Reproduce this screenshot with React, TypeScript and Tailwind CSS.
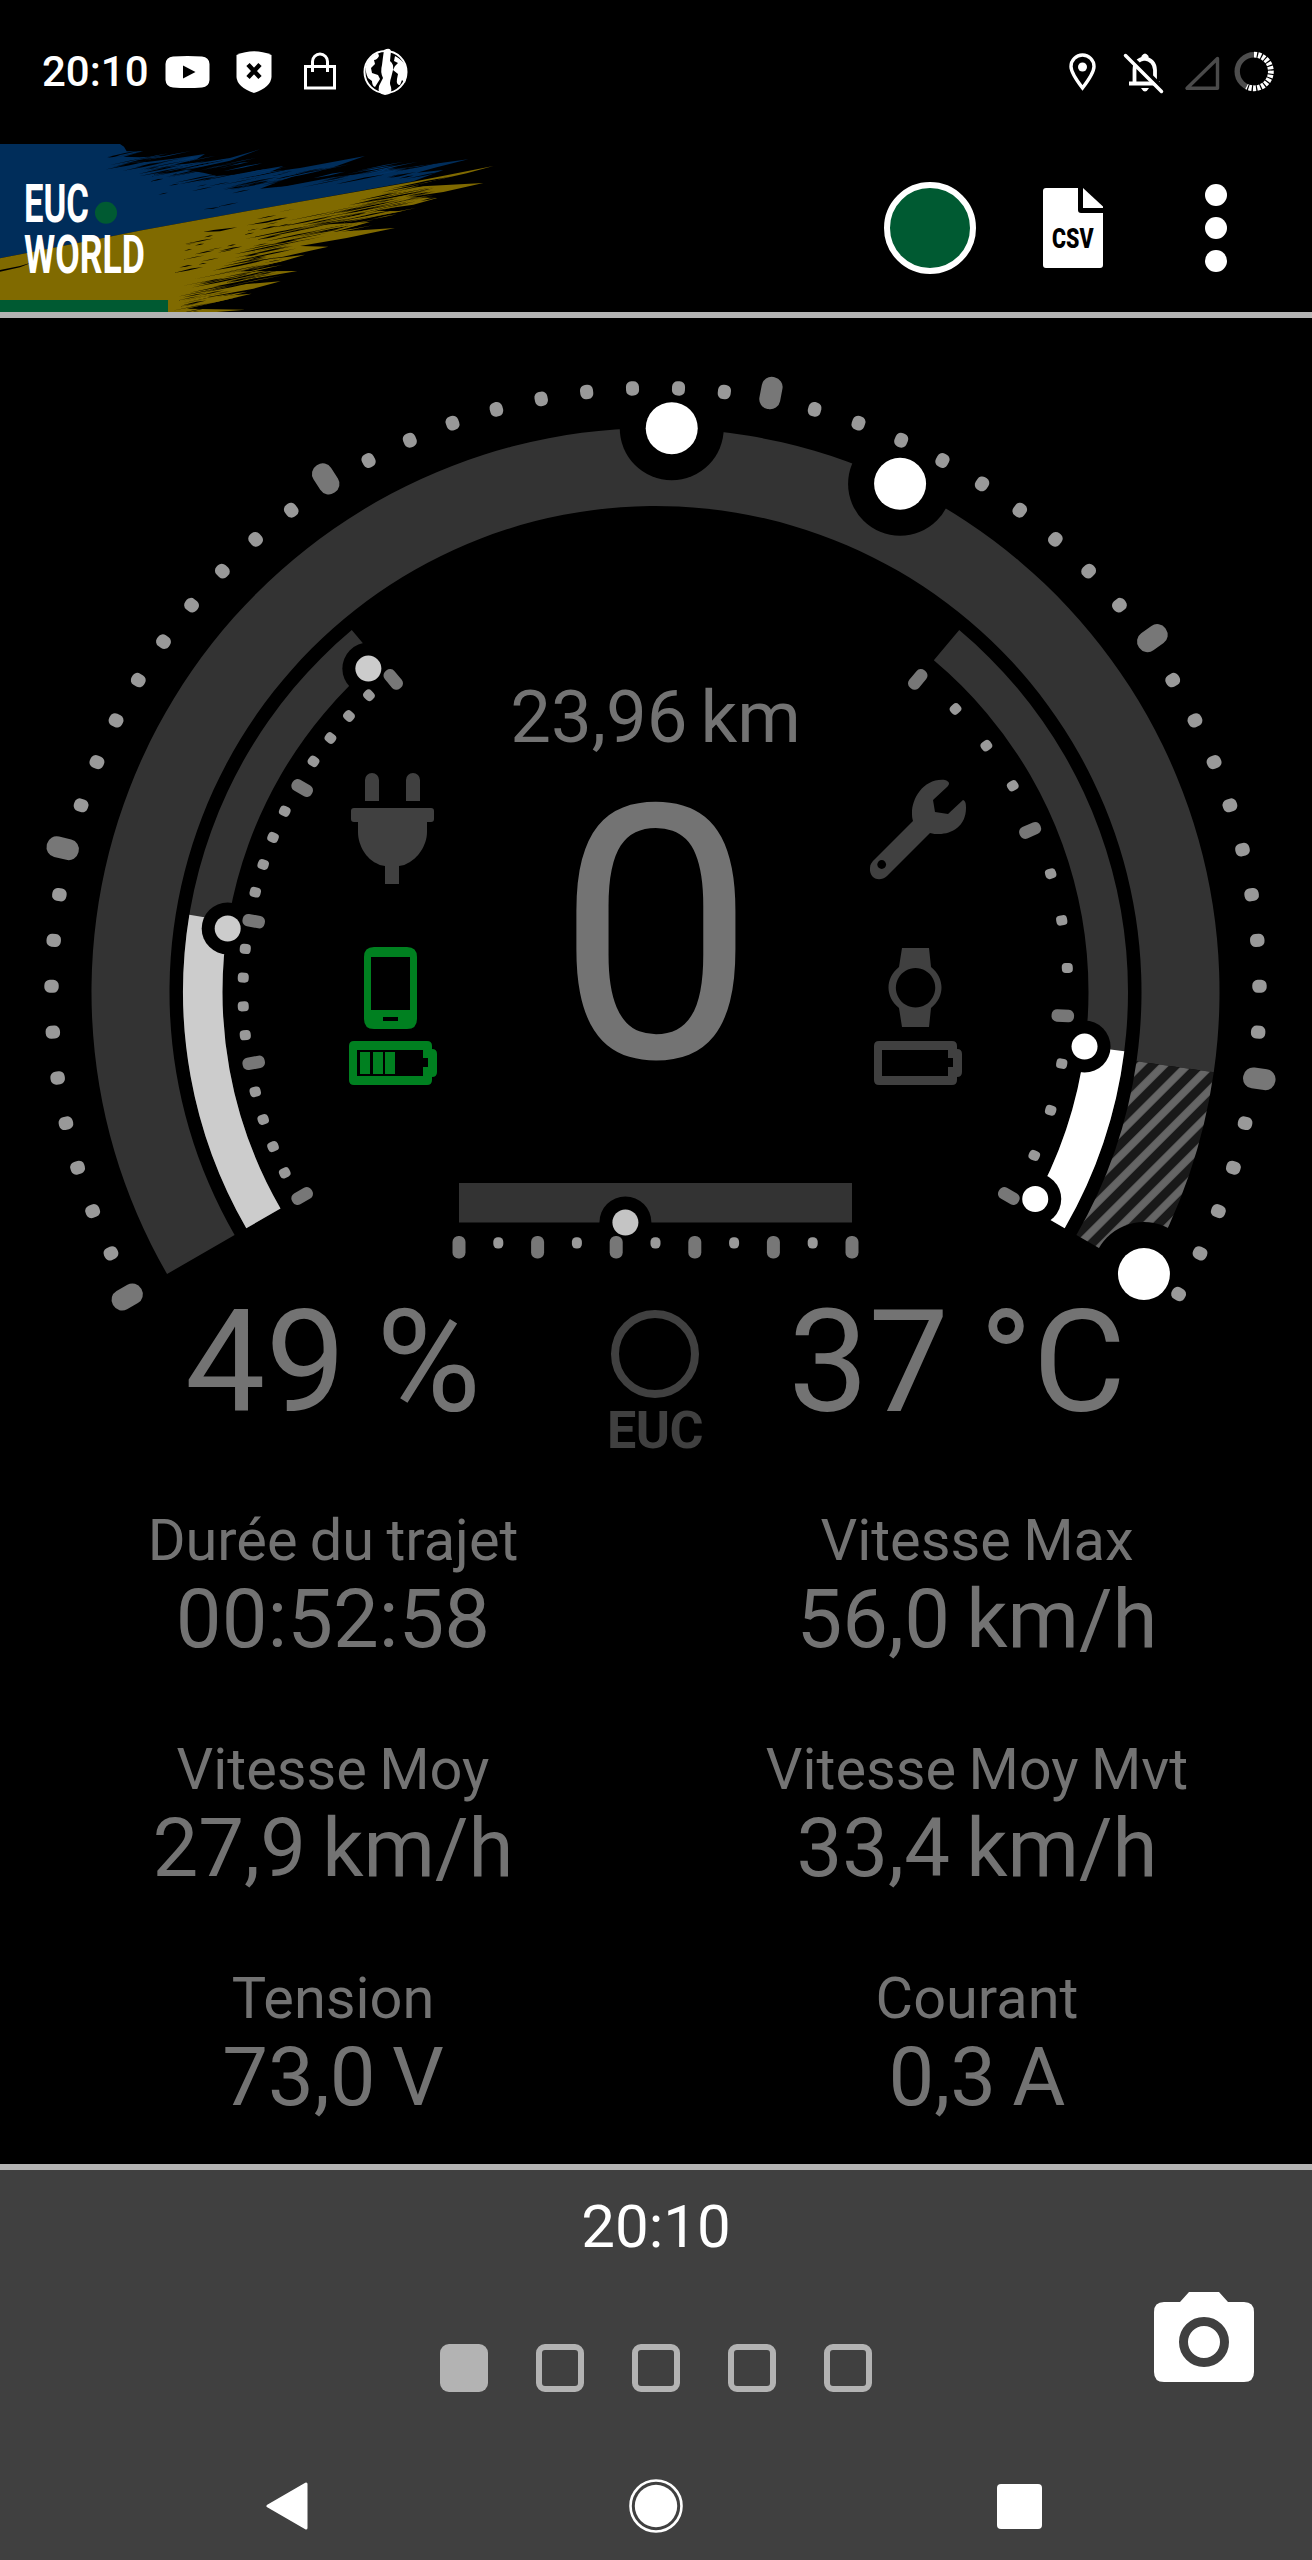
import React from "react";

const CX = 655.5;
const CY = 992;

const rad = (deg: number) => (deg * Math.PI) / 180;
const polar = (r: number, deg: number) => ({
  x: CX + r * Math.cos(rad(deg)),
  y: CY + r * Math.sin(rad(deg)),
});

/** Ring segment drawn clockwise between two angles (degrees, 0 = right). */
function ring(r0: number, r1: number, a0: number, a1: number) {
  const large = a1 - a0 > 180 ? 1 : 0;
  const p1 = polar(r1, a0);
  const p2 = polar(r1, a1);
  const p3 = polar(r0, a1);
  const p4 = polar(r0, a0);
  return `M${p1.x} ${p1.y}A${r1} ${r1} 0 ${large} 1 ${p2.x} ${p2.y}L${p3.x} ${p3.y}A${r0} ${r0} 0 ${large} 0 ${p4.x} ${p4.y}Z`;
}

type TickProps = { r: number; deg: number; len: number; w: number; rx: number; fill: string };

function Tick({ r, deg, len, w, rx, fill }: TickProps) {
  return (
    <rect
      x={r - len / 2}
      y={-w / 2}
      width={len}
      height={w}
      rx={rx}
      fill={fill}
      transform={`translate(${CX} ${CY}) rotate(${deg})`}
    />
  );
}

function Halo({ r, deg, size }: { r: number; deg: number; size: number }) {
  const p = polar(r, deg);
  return <circle cx={p.x} cy={p.y} r={size * 2} fill="#000" />;
}

function Knob({ r, deg, size, fill }: { r: number; deg: number; size: number; fill: string }) {
  const p = polar(r, deg);
  return <circle cx={p.x} cy={p.y} r={size} fill={fill} />;
}

const mainKnobs = [271.65, 295.7, 30];

function Gauge() {
  const outer = Array.from({ length: 56 }, (_, i) => i);
  const left = Array.from({ length: 21 }, (_, i) => i);
  const right = Array.from({ length: 13 }, (_, i) => i);
  return (
    <svg viewBox="0 318 1312 972" className="block h-[972px] w-full shrink-0 overflow-visible">
      <defs>
        <pattern
          id="hatch"
          width="16.7"
          height="16.7"
          patternUnits="userSpaceOnUse"
          patternTransform="translate(1183.3 1069.3) rotate(-45)"
        >
          <rect width="16.7" height="16.7" fill="#191919" />
          <rect width="16.7" height="3.8" fill="#666" />
          <rect y="12.9" width="16.7" height="3.8" fill="#666" />
        </pattern>
      </defs>

      <path d={ring(486, 564, 150, 368.18)} fill="#333" />
      <path d={ring(486, 564, 8.18, 30)} fill="url(#hatch)" />
      {mainKnobs.map((a) => (
        <Halo key={a} r={564} deg={a} size={26} />
      ))}

      <path d={ring(433, 472.5, 150, 230)} fill="#333" />
      <path d={ring(433, 472.5, 150, 189.4)} fill="#ccc" />
      <Halo r={432.5} deg={188.45} size={13} />
      <Halo r={432.5} deg={228.4} size={13} />

      <path d={ring(433, 472.5, -50, 30)} fill="#333" />
      <path d={ring(433, 472.5, 7.2, 30)} fill="#fff" />
      <Halo r={432.5} deg={7.25} size={13} />
      <Halo r={432.5} deg={28.6} size={13} />

      {outer.map((i) =>
        i % 10 === 0 ? (
          <Tick key={i} r={610} deg={150 + (i * 240) / 55} len={32.5} w={21} rx={10} fill="#777" />
        ) : (
          <Tick key={i} r={604} deg={150 + (i * 240) / 55} len={14.4} w={13} rx={5.5} fill="#999" />
        ),
      )}
      {left.map((i) =>
        i % 5 === 0 ? (
          <Tick key={i} r={408} deg={150 + i * 4} len={22.5} w={12.5} rx={5.5} fill="#777" />
        ) : (
          <Tick key={i} r={412.5} deg={150 + i * 4} len={11} w={10} rx={4} fill="#999" />
        ),
      )}
      {right.map((i) =>
        i % 4 === 0 ? (
          <Tick key={i} r={408} deg={30 - (i * 80) / 12} len={22.5} w={12.5} rx={5.5} fill="#777" />
        ) : (
          <Tick key={i} r={412.5} deg={30 - (i * 80) / 12} len={11} w={10} rx={4} fill="#999" />
        ),
      )}

      {mainKnobs.map((a) => (
        <Knob key={a} r={564} deg={a} size={26} fill="#fff" />
      ))}
      <Knob r={432.5} deg={188.45} size={13} fill="#ccc" />
      <Knob r={432.5} deg={228.4} size={13} fill="#ccc" />
      <Knob r={432.5} deg={7.25} size={13} fill="#fff" />
      <Knob r={432.5} deg={28.6} size={13} fill="#fff" />

      {/* horizontal power bar */}
      <rect x="459" y="1183" width="393" height="39.5" fill="#333" />
      <circle cx="625.4" cy="1222.5" r="26" fill="#000" />
      {Array.from({ length: 11 }, (_, i) =>
        i % 2 === 0 ? (
          <rect key={i} x={452.5 + i * 39.3} y="1236" width="13" height="22.6" rx="6" fill="#777" />
        ) : (
          <rect key={i} x={454 + i * 39.3} y="1237.2" width="10" height="11.4" rx="4.5" fill="#999" />
        ),
      )}
      <circle cx="625.4" cy="1222.5" r="13" fill="#c4c4c4" />

      <g fontFamily="Roboto, sans-serif" fill="#737373" textAnchor="middle">
        <text x="655.5" y="742" fontSize="72.5" wordSpacing="-5">23,96 km</text>
        <text x="656" y="1057" fontSize="354">0</text>
      </g>

      {/* plug */}
      <g fill="#404040">
        <path d="M365 801v-21a7 7 0 0 1 14 0v21zM406 801v-21a7 7 0 0 1 14 0v21z" />
        <path d="M354 808h77q3 0 3 3v8q0 3-3 3h-4v10c0 14-10 27-19 31q-4 3-9 3v18h-14v-18q-5 0-9-3c-9-4-18-17-18-31v-10h-4q-3 0-3-3v-8q0-3 3-3z" />
      </g>

      {/* wrench */}
      <g>
        <path
          d="M945 780c6 2 4 5 2 7l-14 13 2 12 13 2 15-14c3 1 3 5 3 8 0 18-14 26-27 26-3 0-6 0-9-1l-43 43c-8 7-18 2-17-8 0-4 2-6 5-9l38-38c-1-3-1-6-1-8 0-15 12-35 33-33z"
          fill="#404040"
        />
        <circle cx="881.7" cy="864.5" r="4.4" fill="#000" />
      </g>

      {/* phone and its battery */}
      <g fill="#008020">
        <path
          fillRule="evenodd"
          d="M374 947h33q10 0 10 10v62q0 10-10 10h-33q-10 0-10-10v-62q0-10 10-10zM371 957v53h39v-53zM383 1017v4h15v-4z"
        />
        <path
          fillRule="evenodd"
          d="M354 1041h73q5 0 5 5v3q5 0 5 5v18q0 5-5 5v3q0 5-5 5h-73q-5 0-5-5v-34q0-5 5-5zM357 1050v26h66v-9h5v-9h-5v-8z"
        />
        <path d="M360 1052h10v22h-10zM373 1052h10v22h-10zM385 1052h10v22h-10z" />
      </g>

      {/* watch and its battery */}
      <g fill="#404040">
        <path
          fillRule="evenodd"
          d="M902 948h27l2 19c14 11 14 30 0 41l-2 19h-27l-3-19c-14-11-14-30 0-41zM915.500 968a19.700 19.700 0 1 0 .1 0z"
        />
        <path
          fillRule="evenodd"
          d="M879 1041h73q5 0 5 5v3q5 0 5 5v18q0 5-5 5v3q0 5-5 5h-73q-5 0-5-5v-34q0-5 5-5zM882 1050v26h66v-9h5v-9h-5v-8z"
        />
      </g>
    </svg>
  );
}

/** Deterministic bristle marks for the painted flag. */
function bristles(seed: number, count: number, x0: number, y0: number, x1: number, y1: number, spread: number, len: number) {
  let s = seed;
  const next = () => {
    s = (s * 16807) % 2147483647;
    return s / 2147483647;
  };
  return Array.from({ length: count }, () => {
    const t = next();
    const x = x0 + (x1 - x0) * t + (next() - 0.5) * 60;
    const y = y0 + (y1 - y0) * t + (next() - 0.5) * spread;
    const l = len * (0.3 + next());
    const h = 0.6 + next() * 1.9;
    return `M${x - l / 2} ${y + l * 0.1}L${x + l * 0.1} ${y - l * 0.02 - h}L${x + l / 2} ${y - l * 0.1}L${x} ${y + h * 0.6}Z`;
  }).join("");
}

const blueGaps =
  bristles(11011, 36, 360, 50, 640, 100, 46, 120) + bristles(50123, 44, 700, 125, 1300, 92, 40, 130) + bristles(81077, 12, 450, 120, 760, 180, 90, 50);
const blueMarks = bristles(23011, 16, 430, 50, 720, 75, 26, 110) + bristles(61331, 18, 760, 105, 1180, 85, 26, 150);
const yellowGaps =
  bristles(37123, 75, 1270, 145, 800, 310, 60, 160) + bristles(41543, 60, 820, 335, 560, 500, 60, 140) + bristles(97001, 24, 560, 350, 900, 240, 110, 70);
const yellowMarks = bristles(53777, 38, 1300, 145, 900, 300, 50, 160) + bristles(71999, 24, 820, 370, 620, 490, 36, 150);

function Brand() {
  return (
    <svg viewBox="0 0 510 168" className="block h-[168px] w-[510px] overflow-hidden">
      <g transform="scale(.33333) translate(0 -12)">
        <path
          fill="#002d5a"
          d="M0 12H360L372 20 380 34 430 34 370 50 420 52 495 48 400 64 440 66 520 56 615 42 590 58 520 74 600 68 690 54 780 28 690 62 600 82 560 90 610 98 650 108 700 104 850 78 810 96 900 84 1095 48 1000 82 900 102 850 120 780 146 860 138 1000 112 1405 58 1310 82 1250 98 1330 90 1240 124 900 185 430 270 0 355Z"
        />
        <path
          fill="#806a00"
          d="M0 355L430 270 900 185 1240 125 1480 78 1400 100 1300 122 1240 140 1450 129 1330 156 1220 172 1312 174 1240 194 1110 212 1208 214 1060 240 960 254 1110 246 1000 276 1185 264 1040 294 900 318 985 320 850 350 740 366 915 344 800 378 720 394 892 393 760 416 640 440 842 424 760 446 620 472 755 461 640 488 560 506 735 509 650 516H0Z"
        />
        <path fill="#000" d={blueGaps} />
        <path fill="#000" d={yellowGaps} />
        <path fill="#003468" d={blueMarks} />
        <path fill="#806a00" d={yellowMarks} />
        <path fill="#000" d="M0 390L60 378 100 366 60 382 0 395ZM610 276L640 270 712 262 660 274ZM610 208L660 200 640 206ZM740 256L830 238 860 234 800 248Z" />
      </g>
      <circle cx="106" cy="68.700" r="11" fill="#005a32" />
      <g fill="#fff" fontFamily="Roboto, sans-serif" fontWeight="700">
        <text x="24" y="77.700" fontSize="54.500" textLength="65" lengthAdjust="spacingAndGlyphs">EUC</text>
        <text x="24" y="128.700" fontSize="54.500" textLength="121" lengthAdjust="spacingAndGlyphs">WORLD</text>
      </g>
      <rect y="156" width="168" height="12" fill="#005a32" />
    </svg>
  );
}

function StatusBar() {
  return (
    <div className="flex h-[144px] shrink-0 items-center text-white">
      <span className="ml-[42px] w-[123px] text-[42px] leading-none font-medium">20:10</span>
      <svg viewBox="165 40 250 64" className="h-[64px] w-[250px]">
        <path
          fillRule="evenodd"
          fill="#fff"
          d="M173 56.500Q187.500 55.500 202 56.500 209 57 209.500 64V80Q209 87 202 87.500 187.500 88.500 173 87.500 166 87 165.500 80V64Q166 57 173 56.500ZM183 65.500V78.500L195.500 72Z"
        />
        <path fill="#fff" d="M236.500 55Q254 47.500 271.500 55V77Q271 87 254 93 237 87 236.500 77Z" />
        <path d="M248 64.500L260 77.500M260 64.500L248 77.500" stroke="#000" strokeWidth="4.500" />
        <rect x="305.500" y="66.500" width="29" height="21.500" fill="none" stroke="#fff" strokeWidth="3" />
        <path d="M312.500 72V61.500a7.500 7.500 0 0 1 15 0V72" fill="none" stroke="#fff" strokeWidth="3" />
        <circle cx="385.500" cy="72" r="21" fill="none" stroke="#fff" strokeWidth="2" />
        <path
          fill="#fff"
          d="M384 50q6-3 7 1l-1 10q4 3 3 9l-2 8q-2 5 0 9 2 7-6 8-8-1-6-9l4-8q-3-6-1-13l1-8zM366 66q2-9 12-13l1 3q-2 4-5 4l1 4-4 4 1 5 6 2 2 4-5 8q-3-1-3-6l-4-3q-3-6-2-12zM395 56q8 4 11 11l1 8-2 8-3-3-2 5q-4 0-3-6l1-5-5-4 2-4 3-3-4-2z"
        />
      </svg>
      <svg viewBox="1060 40 220 64" className="mr-[32px] ml-auto h-[64px] w-[220px]">
        <path
          d="M1082.500 88Q1071 73 1071 66.500a11.500 11.500 0 0 1 23 0Q1094 73 1082.500 88Z"
          fill="none"
          stroke="#fff"
          strokeWidth="3.400"
        />
        <circle cx="1082.500" cy="67" r="4.500" fill="#fff" />
        <path d="M1134.500 83V70q0-10 10-11.500Q1154.500 60 1155 70V83M1129 83.500H1160" fill="none" stroke="#fff" strokeWidth="3.800" />
        <path d="M1141.500 60V56q3.500-5 7 0V60ZM1141 88h8q-4 7-8 0Z" fill="#fff" />
        <path d="M1127 53L1164 89" stroke="#000" strokeWidth="4" />
        <path d="M1125.500 55.500L1161.500 91.500" stroke="#fff" strokeWidth="3.500" strokeLinecap="round" />
        <path d="M1187 88.200H1217.500V58.500Z" fill="none" stroke="#4a4a4a" strokeWidth="3.400" strokeLinejoin="round" />
        <circle cx="1254" cy="71.500" r="16.800" fill="none" stroke="#4d4d4d" strokeWidth="5.400" />
        <g fill="none" strokeWidth="5.800">
          <path d="M1254 54.700A16.800 16.800 0 1 1 1246.500 86.500" stroke="#000" />
          <path d="M1254 54.700A16.800 16.800 0 1 1 1246.500 86.500" stroke="#fff" strokeDasharray="3 1.200" />
        </g>
      </svg>
    </div>
  );
}

function Header() {
  return (
    <header className="flex h-[174px] shrink-0 items-center justify-between border-b-[6px] border-[#b3b3b3]">
      <Brand />
      <div className="flex items-center pr-[85px]">
        <div className="size-[92px] rounded-full border-[6px] border-white bg-[#005a32]" />
        <svg viewBox="0 0 60 80" className="ml-[67px] h-[80px] w-[60px] overflow-visible">
          <path d="M3 0H35V22q0 3 3 3H60V77q0 3-3 3H3q-3 0-3-3V3q0-3 3-3z" fill="#fff" />
          <path d="M40 0L60 18.500V20H40Z" fill="#fff" />
          <text
            x="9"
            y="60"
            fontFamily="Roboto, sans-serif"
            fontWeight="900"
            fontSize="28.500"
            textLength="41.500"
            lengthAdjust="spacingAndGlyphs"
            fill="#000"
          >
            CSV
          </text>
        </svg>
        <div className="ml-[102px] flex flex-col gap-[11px]">
          <i className="size-[22px] rounded-full bg-white" />
          <i className="size-[22px] rounded-full bg-white" />
          <i className="size-[22px] rounded-full bg-white" />
        </div>
      </div>
    </header>
  );
}

const stats = [
  ["Durée du trajet", "00:52:58"],
  ["Vitesse Max", "56,0 km/h"],
  ["Vitesse Moy", "27,9 km/h"],
  ["Vitesse Moy Mvt", "33,4 km/h"],
  ["Tension", "73,0 V"],
  ["Courant", "0,3 A"],
];

export default function App() {
  return (
    <div className="flex h-[2560px] w-[1312px] flex-col overflow-hidden bg-black font-[Roboto,sans-serif] text-[#737373]">
      <StatusBar />
      <Header />
      <main className="flex h-[1846px] shrink-0 flex-col">
        <Gauge />
        <div className="flex h-[220px] shrink-0 items-start text-center">
          <div className="ml-[53px] w-[560px] text-[143px] leading-[144px] whitespace-nowrap [word-spacing:-5px]">49 %</div>
          <div className="-ml-[3px] flex w-[90px] flex-col items-center pt-[20px]">
            <div className="size-[88px] shrink-0 rounded-full border-[8px] border-[#404040]" />
            <div className="mt-[7px] text-[52px] leading-none font-bold tracking-[-0.5px] text-[#404040]">EUC</div>
          </div>
          <div className="w-[514px] text-[143px] leading-[144px] whitespace-nowrap [word-spacing:-5px]">37 °C</div>
        </div>
        <div className="grid grid-cols-2 pr-[13px] pl-[11px] text-center">
          {stats.map(([label, value]) => (
            <div key={label} className="h-[229px]">
              <div className="text-[57.7px] leading-[60px] [word-spacing:-2px]">{label}</div>
              <div className="mt-[9px] text-[81.5px] leading-[81px] [word-spacing:-4px]">{value}</div>
            </div>
          ))}
        </div>
      </main>
      <footer className="flex h-[396px] shrink-0 flex-col border-t-[6px] border-[#b3b3b3] bg-[#404040]">
        <div className="pt-[27px] text-center text-[60px] leading-none text-white">20:10</div>
        <div className="mt-[35px] grid h-[100px] grid-cols-[1fr_auto_1fr]">
          <span />
          <div className="flex gap-[48px] self-end">
            <i className="size-[48px] rounded-[9px] bg-[#b3b3b3]" />
            <i className="size-[48px] rounded-[9px] border-[6px] border-[#b3b3b3]" />
            <i className="size-[48px] rounded-[9px] border-[6px] border-[#b3b3b3]" />
            <i className="size-[48px] rounded-[9px] border-[6px] border-[#b3b3b3]" />
            <i className="size-[48px] rounded-[9px] border-[6px] border-[#b3b3b3]" />
          </div>
          <svg viewBox="0 0 100 90" className="mr-[58px] h-[90px] w-[100px] justify-self-end">
            <path fill="#fff" d="M35 0H65L74 10H90q10 0 10 10V80q0 10-10 10H10q-10 0-10-10V20q0-10 10-10H26Z" />
            <circle cx="50" cy="50" r="20.500" fill="none" stroke="#404040" strokeWidth="9" />
          </svg>
        </div>
        <div className="mt-[87px] flex h-[54px] items-center pl-[266px]">
          <svg viewBox="0 0 42 48" className="h-[48px] w-[42px]">
            <path d="M2 24L40 2V46Z" fill="#fff" stroke="#fff" strokeWidth="3" strokeLinejoin="round" />
          </svg>
          <svg viewBox="0 0 54 54" className="ml-[321px] size-[54px]">
            <circle cx="27" cy="27" r="25.500" fill="none" stroke="#fff" strokeWidth="2.600" />
            <circle cx="27" cy="27" r="21.200" fill="#fff" />
          </svg>
          <i className="ml-[314px] size-[45px] rounded-[4px] bg-white" />
        </div>
      </footer>
    </div>
  );
}
